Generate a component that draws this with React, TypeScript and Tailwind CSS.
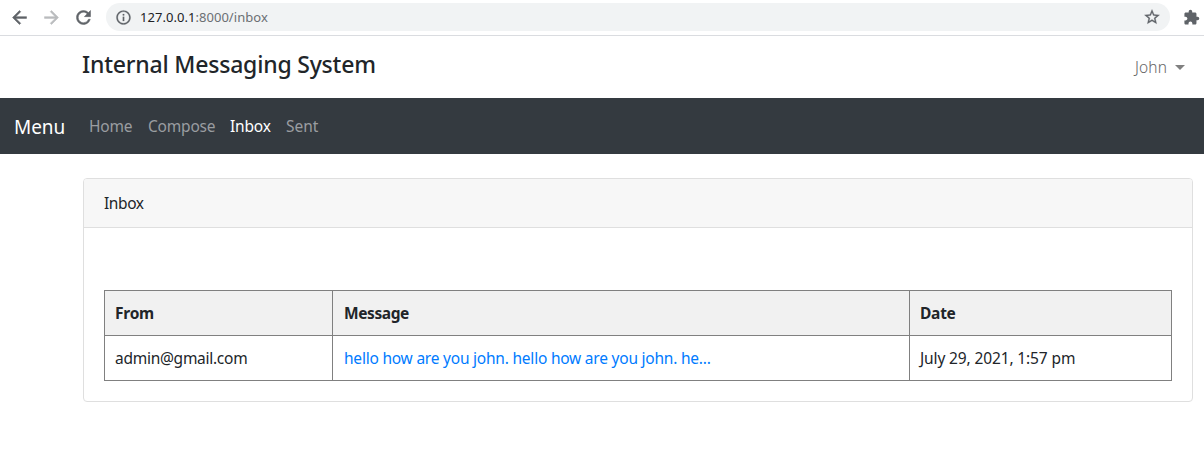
import { MdArrowBack, MdArrowForward, MdExtension, MdInfoOutline, MdRefresh, MdStarBorder } from "react-icons/md";

function BrowserBar() {
  return (
    <div className="flex h-9 items-start border-b border-[#dadce0] bg-white pl-[9px] pt-[3px] text-[#5f6368]">
      <div className="flex h-7 items-center gap-[11px] pr-3">
        <MdArrowBack className="size-[21px] [&>path:last-child]:[stroke-width:0.6]" />
        <MdArrowForward className="size-[21px] text-[#babcbe] [&>path:last-child]:[stroke-width:0.6]" />
        <MdRefresh className="size-[21px] [&>path:last-child]:[stroke-width:0.6]" />
      </div>
      <div className="flex h-7 w-[1064px] shrink-0 items-center rounded-full bg-[#f1f3f4] pl-[9px] pr-[9px]">
        <MdInfoOutline className="size-[17px] [&>path:last-child]:[stroke-width:0.3]" />
        <span className="ml-2 flex-1 pt-0.5 text-[13px] tracking-[0.04px] text-[#6b6f73]">
          <span className="text-[#202124]">127.0.0.1</span>:8000/inbox
        </span>
        <MdStarBorder className="size-[18px] [&>path:last-child]:[stroke-width:0.4]" />
      </div>
      <div className="flex h-7 items-center pl-[13px]">
        <MdExtension className="size-[17px] shrink-0" />
      </div>
    </div>
  );
}

function PageHeader() {
  return (
    <header className="flex h-[62px] items-center justify-between pl-[82px] pr-[19px]">
      <h1 className="-mt-1.5 text-[23px] font-medium leading-7 tracking-[-0.2px] text-[#212529]">Internal Messaging System</h1>
      <div className="flex items-center gap-2 text-[15.5px] font-light text-[#666]">
        <span className="pt-0.5 tracking-[0.1px]">John</span>
        <svg width="10" height="5" viewBox="0 0 10 5" fill="#808080">
          <path d="M0 0h10L5 5z" />
        </svg>
      </div>
    </header>
  );
}

function NavBar() {
  return (
    <nav className="flex h-14 items-center bg-[#343a40] pt-0.5 text-[15.5px] tracking-[-0.2px] text-[#9a9da0]">
      <span className="w-[89px] pl-[14px] text-[19px] tracking-[-0.1px] text-white">Menu</span>
      <span className="w-[59px]">Home</span>
      <span className="w-[82px]">Compose</span>
      <span className="w-14 text-white">Inbox</span>
      <span className="tracking-[0px]">Sent</span>
    </nav>
  );
}

function InboxTable() {
  return (
    <table className="w-[1068px] table-fixed border-collapse text-left [&_td]:border [&_td]:border-[#808080] [&_td]:px-[10px] [&_td]:pb-0 [&_td]:pt-0.5 [&_th]:border [&_th]:border-[#808080] [&_th]:px-[10px] [&_th]:pb-0 [&_th]:pt-0.5">
      <colgroup>
        <col className="w-[228px]" />
        <col className="w-[577px]" />
        <col className="w-[262px]" />
      </colgroup>
      <thead>
        <tr className="h-[45px] bg-[#f1f1f1] tracking-[-0.25px]">
          <th>From</th>
          <th><span className="ml-px tracking-[-0.4px]">Message</span></th>
          <th>Date</th>
        </tr>
      </thead>
      <tbody>
        <tr className="h-[45px]">
          <td className="tracking-[-0.27px]">admin@gmail.com</td>
          <td className="tracking-[-0.22px] text-[#007bff]">
            <span className="ml-px">hello how are you john. hello how are you john. he...</span>
          </td>
          <td className="tracking-[-0.13px]">July 29, 2021, 1:57 pm</td>
        </tr>
      </tbody>
    </table>
  );
}

export default function App() {
  return (
    <div className="h-[471px] overflow-hidden bg-white font-['Noto_Sans',sans-serif] text-[15.5px] text-[#212529]">
      <BrowserBar />
      <PageHeader />
      <NavBar />
      <main className="pl-[83px] pr-[11px] pt-6">
        <section className="h-[224px] rounded border border-[#dfdfdf]">
          <h2 className="flex h-[49px] items-center rounded-t-[3px] border-b border-[#dfdfdf] bg-[#f7f7f7] pl-5 pt-0.5 tracking-[-0.4px]">Inbox</h2>
          <div className="pl-5 pt-[62px]">
            <InboxTable />
          </div>
        </section>
      </main>
    </div>
  );
}
